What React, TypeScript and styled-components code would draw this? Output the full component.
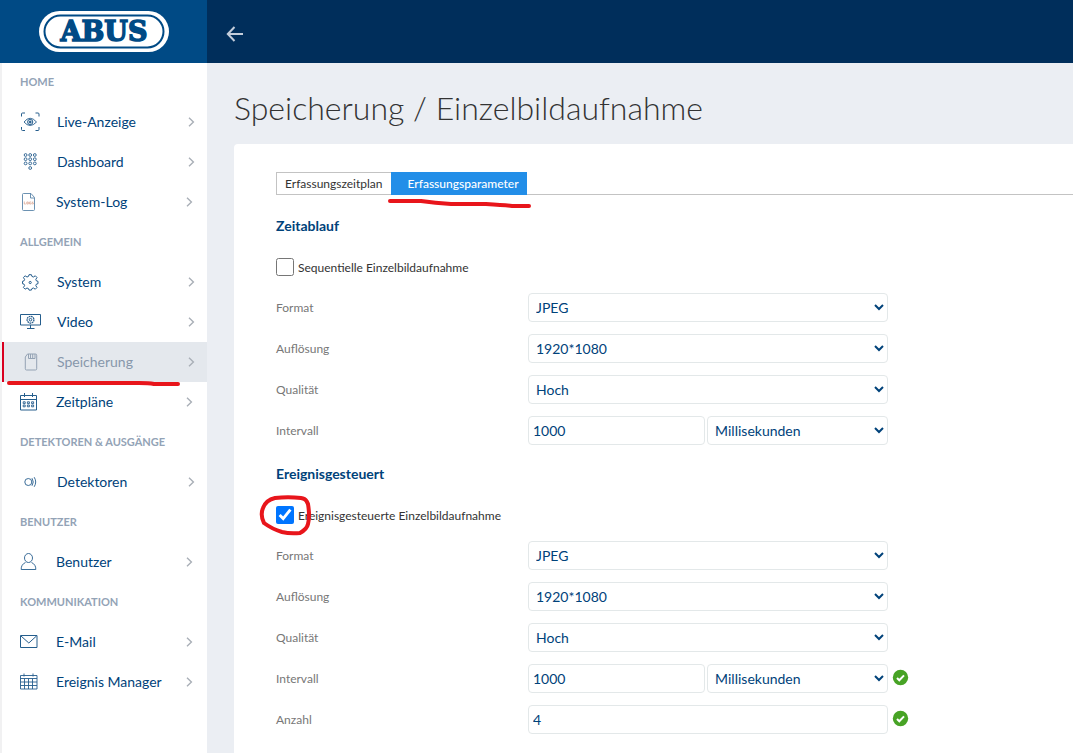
import React, { useState } from 'react';
import styled, { createGlobalStyle, css } from 'styled-components';

const color = {
  brand: '#004a85',
  header: '#002e5b',
  navy: '#00427a',
  muted: '#93a3b6',
  page: '#ebeef3',
  border: '#e3e8e9',
  tab: '#228ee8',
  red: '#e8151b',
};

const GlobalStyle = createGlobalStyle`
  *, *::before, *::after { box-sizing: border-box; }
  body {
    margin: 0;
    background: ${color.page};
    color: #333;
    font-family: Lato, "Liberation Sans", sans-serif;
    font-size: 12px;
  }
  button, input, select { font-family: inherit; }
`;

const Page = styled.div`
  min-height: 100vh;
  display: grid;
  grid-template-columns: 207px minmax(0, 1fr);
  grid-template-rows: 63px 1fr;
`;

const Brand = styled.a`
  display: flex;
  align-items: center;
  justify-content: center;
  background: ${color.brand};
`;

const TopBar = styled.header`
  display: flex;
  align-items: center;
  padding: 5px 18px 0;
  background: ${color.header};
`;

const BackButton = styled.button`
  display: flex;
  padding: 0;
  border: 0;
  background: none;
  color: #c3cddb;
  cursor: pointer;
`;

const Sidebar = styled.nav`
  border-left: 2px solid #f1f1f2;
  background: #fff;
`;

const Group = styled.section`
  margin-bottom: 1px;
`;

const GroupTitle = styled.h2`
  margin: 0;
  padding: 0 0 2px 18px;
  color: ${color.muted};
  font-size: 11px;
  font-weight: 700;
  line-height: 37px;
`;

const NavLink = styled.a<{ $active?: boolean; $narrow?: boolean }>`
  position: relative;
  display: flex;
  align-items: center;
  height: 40px;
  padding: 0 ${(p) => (p.$narrow ? 14 : 12)}px 0 18px;
  color: ${color.navy};
  font-size: 14px;
  text-decoration: none;
  ${(p) =>
    p.$active &&
    css`
      background: #e4e8ed;
      color: #8797ab;
      box-shadow: inset 2px 0 #d9001f;
    `}
`;

const IconSlot = styled.span<{ $narrow?: boolean }>`
  display: flex;
  width: ${(p) => (p.$narrow ? 36 : 37)}px;
  opacity: 0.85;
`;

const NavText = styled.span`
  flex: 1;
  padding-bottom: 2px;
`;

const Stroke = styled.svg`
  display: block;
  fill: none;
  stroke: currentColor;
`;

const Chevron = styled(Stroke)`
  color: #a9afb7;
`;

const Annotation = styled.svg<{ $left: number; $top: number }>`
  position: absolute;
  z-index: 2;
  left: ${(p) => p.$left}px;
  top: ${(p) => p.$top}px;
  fill: none;
  stroke: ${color.red};
  stroke-width: 4;
  stroke-linecap: round;
  stroke-linejoin: round;
  pointer-events: none;
`;

const Main = styled.main`
  display: flex;
  flex-direction: column;
  padding: 23px 0 0 27px;
`;

const Title = styled.h1`
  margin: 0 0 14px;
  color: #333;
  font-size: 32px;
  font-weight: 300;
  line-height: 44px;
`;

const Card = styled.div`
  flex: 1;
  padding: 28px 0 20px 42px;
  border-radius: 4px 0 0 0;
  background: #fff;
`;

const Tabs = styled.div`
  position: relative;
  display: flex;
  height: 23px;
  margin-bottom: 19px;
  border-bottom: 1px solid #c3c3c3;
`;

const Tab = styled.button<{ $active?: boolean }>`
  height: 23px;
  padding: 0 8px;
  border: 1px solid #c3c3c3;
  border-right: 0;
  background: #fff;
  color: #333;
  font-size: 12px;
  white-space: nowrap;
  cursor: pointer;
  ${(p) =>
    p.$active &&
    css`
      padding: 0 8px 0 17px;
      border: 0;
      background: ${color.tab};
      color: #fff;
      font-weight: 500;
    `}
`;

const Section = styled.section`
  margin-bottom: 17px;
`;

const SectionTitle = styled.h3`
  margin: 0 0 19px;
  color: ${color.navy};
  font-size: 14px;
  font-weight: 700;
  line-height: 24px;
`;

const CheckRow = styled.label`
  position: relative;
  display: flex;
  align-items: center;
  gap: 4px;
  height: 20px;
  margin-bottom: 16px;
`;

const Checkbox = styled.input`
  width: 18px;
  height: 18px;
  margin: 0;
`;

const Rows = styled.div`
  display: grid;
  gap: 12px;
`;

const Row = styled.div`
  display: flex;
  align-items: center;
  height: 29px;
`;

const Label = styled.label`
  width: 252px;
  flex: none;
  color: #777;
`;

const Fields = styled.div`
  display: flex;
  flex: 0 1 360px;
  gap: 2px;
`;

const control = css`
  min-width: 0;
  height: 29px;
  border: 1px solid ${color.border};
  border-radius: 4px;
  background: #fff;
  color: ${color.navy};
  font-size: 14px;
`;

const Input = styled.input`
  ${control}
  flex: 177;
  padding: 0 4px;
`;

const Select = styled.select`
  ${control}
  flex: 181;
  padding: 0 5px 0 3px;
`;

const Valid = styled.svg`
  display: block;
  flex: none;
  margin: 0 0 3px 4px;
`;

const icons: Record<string, React.ReactNode> = {
  live: (
    <Stroke width="20" height="20" viewBox="0 0 20 20">
      <path d="M1.500 4.500V2q0-1 1-1H5M15.500 1H18q1 0 1 1v2.500M19 15v2.500q0 1-1 1h-2.500M5 18.500H2.500q-1 0-1-1V15" />
      <path d="M4 10q6-7.500 12.500 0q-6.500 7-12.500 0z" strokeWidth="0.900" />
      <circle cx="10.200" cy="10" r="2.600" />
      <circle cx="10.200" cy="10" r="1" fill="currentColor" />
    </Stroke>
  ),
  dashboard: (
    <Stroke width="20" height="20" viewBox="0 0 20 20" strokeWidth="0.9">
      {[3, 7.2, 11.4].map((y) => [5.6, 10.2, 14.8].map((x) => <circle key={`${x}-${y}`} cx={x} cy={y} r="1.400" />))}
      <circle cx="10.200" cy="16" r="1.400" />
    </Stroke>
  ),
  log: (
    <Stroke width="18" height="20" viewBox="0 0 18 20">
      <g strokeWidth="0.9" opacity="0.75">
        <path d="M3.500 1.500h7.500l3.500 4v12q0 1-1 1h-10q-1 0-1-1v-15q0-1 1-1z" />
        <path d="M10.500 1.500v4.500h4" />
      </g>
      <g style={{ stroke: '#d79a83' }} strokeWidth="0.800">
        <path d="M4.300 9.500v2.500h1.500M6.800 10h1.500v2H6.800zM11.200 10H9.600v2h1.600v-1M13.300 10h-1v1h1v1h-1" />
      </g>
    </Stroke>
  ),
  gear: (
    <Stroke width="20" height="20" viewBox="0 0 20 20">
      <path d="M8.500 4.400 9 2.700h2.400l.5 1.700 1.500.6 1.900-1.200 1.700 1.700-1.200 1.900.6 1.500 1.600.4v2.400l-1.600.4-.6 1.500 1.200 1.900-1.700 1.700-1.900-1.200-1.500.6-.5 1.500H9l-.5-1.500-1.500-.6-1.900 1.200-1.700-1.700 1.200-1.900L4 12.100l-1.500-.4V9.300L4 8.900l.6-1.500-1.200-1.900 1.700-1.700L7 5z" />
      <circle cx="10.200" cy="10.500" r="1.100" />
    </Stroke>
  ),
  video: (
    <Stroke width="22" height="20" viewBox="0 0 22 20">
      <path d="M.5 2.500h20v10.500H.5zM10.500 13v4M7 16.500h7.500" />
      <circle cx="10.500" cy="7.700" r="3.400" strokeWidth="1.300" strokeDasharray="1.700 .6" />
      <circle cx="10.500" cy="7.700" r="1.300" />
    </Stroke>
  ),
  storage: (
    <Stroke width="20" height="20" viewBox="0 0 20 20">
      <path d="M7.500 2h8q1.200 0 1.200 1.200v13.600q0 1.200-1.200 1.200h-9Q5.300 18 5.300 16.800V5z" />
      <path d="M8.500 2v4.500h6.500V2M10.500 2v4.500M12.700 2v4.500" />
    </Stroke>
  ),
  calendar: (
    <Stroke width="18" height="20" viewBox="0 0 18 20">
      <path d="M.5 3.500h16v14.500H.5zM.5 7.500h16M4.500 1v4M12.500 1v4" />
      <g strokeWidth="0.900">
        {[9.8, 13].map((y) => [3.2, 7.4, 11.6].map((x) => <path key={`${x}-${y}`} d={`M${x} ${y}h2v1.800h-2z`} />))}
      </g>
    </Stroke>
  ),
  detector: (
    <Stroke width="20" height="20" viewBox="0 0 20 20" strokeWidth="0.900">
      <circle cx="8.300" cy="10" r="3.500" />
      <path d="M12 6.200q2.500 3.800 0 7.600M14.200 5.200q3 4.800 0 9.600" />
    </Stroke>
  ),
  user: (
    <Stroke width="18" height="20" viewBox="0 0 18 20" strokeWidth="0.900">
      <ellipse cx="8.500" cy="6" rx="4" ry="4.500" />
      <path d="M5.500 10.500Q1 12.500 1.200 17.500h14.600Q16 12.500 11.500 10.500" />
    </Stroke>
  ),
  mail: (
    <Stroke width="18" height="20" viewBox="0 0 18 20">
      <path d="M.5 3.500h16.500v12H.5zM1 4l7.800 7L16.500 4" />
    </Stroke>
  ),
  events: (
    <Stroke width="18" height="20" viewBox="0 0 18 20" strokeWidth="0.900">
      <path d="M.5 3.500h16.500v13.500H.5zM.5 6.500h16.500M.5 10h16.500M.5 13.500h16.500M4.500 6.500V17M8.500 6.500V17M12.500 6.500V17M4 1.500v3M13 1.500v3" />
    </Stroke>
  ),
};

type Item = { label: string; icon: string; narrow?: boolean; active?: boolean };

const menu: { title: string; items: Item[] }[] = [
  {
    title: 'HOME',
    items: [
      { label: 'Live-Anzeige', icon: 'live' },
      { label: 'Dashboard', icon: 'dashboard' },
      { label: 'System-Log', icon: 'log', narrow: true },
    ],
  },
  {
    title: 'ALLGEMEIN',
    items: [
      { label: 'System', icon: 'gear' },
      { label: 'Video', icon: 'video' },
      { label: 'Speicherung', icon: 'storage', active: true },
      { label: 'Zeitpläne', icon: 'calendar', narrow: true },
    ],
  },
  { title: 'DETEKTOREN & AUSGÄNGE', items: [{ label: 'Detektoren', icon: 'detector' }] },
  { title: 'BENUTZER', items: [{ label: 'Benutzer', icon: 'user', narrow: true }] },
  {
    title: 'KOMMUNIKATION',
    items: [
      { label: 'E-Mail', icon: 'mail', narrow: true },
      { label: 'Ereignis Manager', icon: 'events', narrow: true },
    ],
  },
];

const Logo = () => (
  <svg width="130" height="42" viewBox="0 0 130 42" role="img" aria-label="ABUS">
    <rect x="0" y="0" width="130" height="41" rx="20.500" fill="#fff" />
    <rect x="5.500" y="4.500" width="119" height="32" rx="16" fill="none" stroke={color.brand} strokeWidth="2" />
    <text
      x="65"
      y="30"
      textAnchor="middle"
      fontFamily="DejaVu Serif, serif"
      fontWeight="700"
      fontSize="27"
      fill={color.brand}
      stroke={color.brand}
      strokeWidth="1.500"
    >
      ABUS
    </text>
  </svg>
);

const ValidMark = () => (
  <Valid width="17" height="17" viewBox="0 0 17 17" role="img" aria-label="OK">
    <circle cx="8.500" cy="8.500" r="7.700" fill="#47a325" />
    <path d="m5 9 2.300 2.300L12 6.400" fill="none" stroke="#fff" strokeWidth="2" />
  </Valid>
);

const Picker = ({ id, value, label }: { id: string; value: string; label?: string }) => (
  <Select id={id} aria-label={label}>
    <option>{value}</option>
  </Select>
);

const CaptureSettings = ({
  id,
  title,
  checkLabel,
  initial,
  count,
  mark,
}: {
  id: string;
  title: string;
  checkLabel: string;
  initial: boolean;
  count?: string;
  mark?: React.ReactNode;
}) => {
  const [enabled, setEnabled] = useState(initial);
  return (
    <Section>
      <SectionTitle>{title}</SectionTitle>
      <CheckRow>
        <Checkbox type="checkbox" checked={enabled} onChange={(e) => setEnabled(e.target.checked)} />
        <span>{checkLabel}</span>
        {mark}
      </CheckRow>
      <Rows>
        {[
          ['Format', 'JPEG'],
          ['Auflösung', '1920*1080'],
          ['Qualität', 'Hoch'],
        ].map(([label, value]) => (
          <Row key={label}>
            <Label htmlFor={`${id}-${label}`}>{label}</Label>
            <Fields>
              <Picker id={`${id}-${label}`} value={value} />
            </Fields>
          </Row>
        ))}
        <Row>
          <Label htmlFor={`${id}-interval`}>Intervall</Label>
          <Fields>
            <Input id={`${id}-interval`} defaultValue="1000" />
            <Picker id={`${id}-unit`} value="Millisekunden" label="Einheit" />
          </Fields>
          {count && <ValidMark />}
        </Row>
        {count && (
          <Row>
            <Label htmlFor={`${id}-count`}>Anzahl</Label>
            <Fields>
              <Input id={`${id}-count`} defaultValue={count} />
            </Fields>
            <ValidMark />
          </Row>
        )}
      </Rows>
    </Section>
  );
};

export default function App() {
  return (
    <>
      <GlobalStyle />
      <Page>
        <Brand href="#">
          <Logo />
        </Brand>
        <TopBar>
          <BackButton aria-label="Zurück">
            <Stroke width="20" height="20" viewBox="0 0 20 20" strokeWidth="2">
              <path d="M18 10H3.500M9.500 3 2.800 10l6.700 7" />
            </Stroke>
          </BackButton>
        </TopBar>
        <Sidebar>
          {menu.map((group) => (
            <Group key={group.title}>
              <GroupTitle>{group.title}</GroupTitle>
              {group.items.map((item) => (
                <NavLink key={item.label} href="#" $active={item.active} $narrow={item.narrow}>
                  <IconSlot $narrow={item.narrow}>{icons[item.icon]}</IconSlot>
                  <NavText>{item.label}</NavText>
                  <Chevron width="8" height="10" viewBox="0 0 8 10" strokeWidth="1.400">
                    <path d="m2 .8 4.400 4.200L2 9.200" />
                  </Chevron>
                  {item.active && (
                    <Annotation $left={2} $top={36} width="180" height="10">
                      <path d="M5 5h130q10 0 15 1h24" />
                    </Annotation>
                  )}
                </NavLink>
              ))}
            </Group>
          ))}
        </Sidebar>
        <Main>
          <Title>Speicherung / Einzelbildaufnahme</Title>
          <Card>
            <Tabs>
              <Tab>Erfassungszeitplan</Tab>
              <Tab $active>Erfassungsparameter</Tab>
              <Annotation $left={110} $top={24} width="150" height="16">
                <path d="M4 5h31q14 2 30 3h35q18 1 26 2h17" />
              </Annotation>
            </Tabs>
            <CaptureSettings
              id="sequence"
              title="Zeitablauf"
              checkLabel="Sequentielle Einzelbildaufnahme"
              initial={false}
            />
            <CaptureSettings
              id="event"
              title="Ereignisgesteuert"
              checkLabel="Ereignisgesteuerte Einzelbildaufnahme"
              initial
              count="4"
              mark={
                <Annotation $left={-18} $top={-12} width="56" height="46">
                  <path d="M48.500 8Q47 5.500 43 5 30 3.500 17 5 8 7 5 15 2 22 6 30q8 6 18 9 8 2 18 1 7-4 8-9 2-8 0-20z" />
                </Annotation>
              }
            />
          </Card>
        </Main>
      </Page>
    </>
  );
}
